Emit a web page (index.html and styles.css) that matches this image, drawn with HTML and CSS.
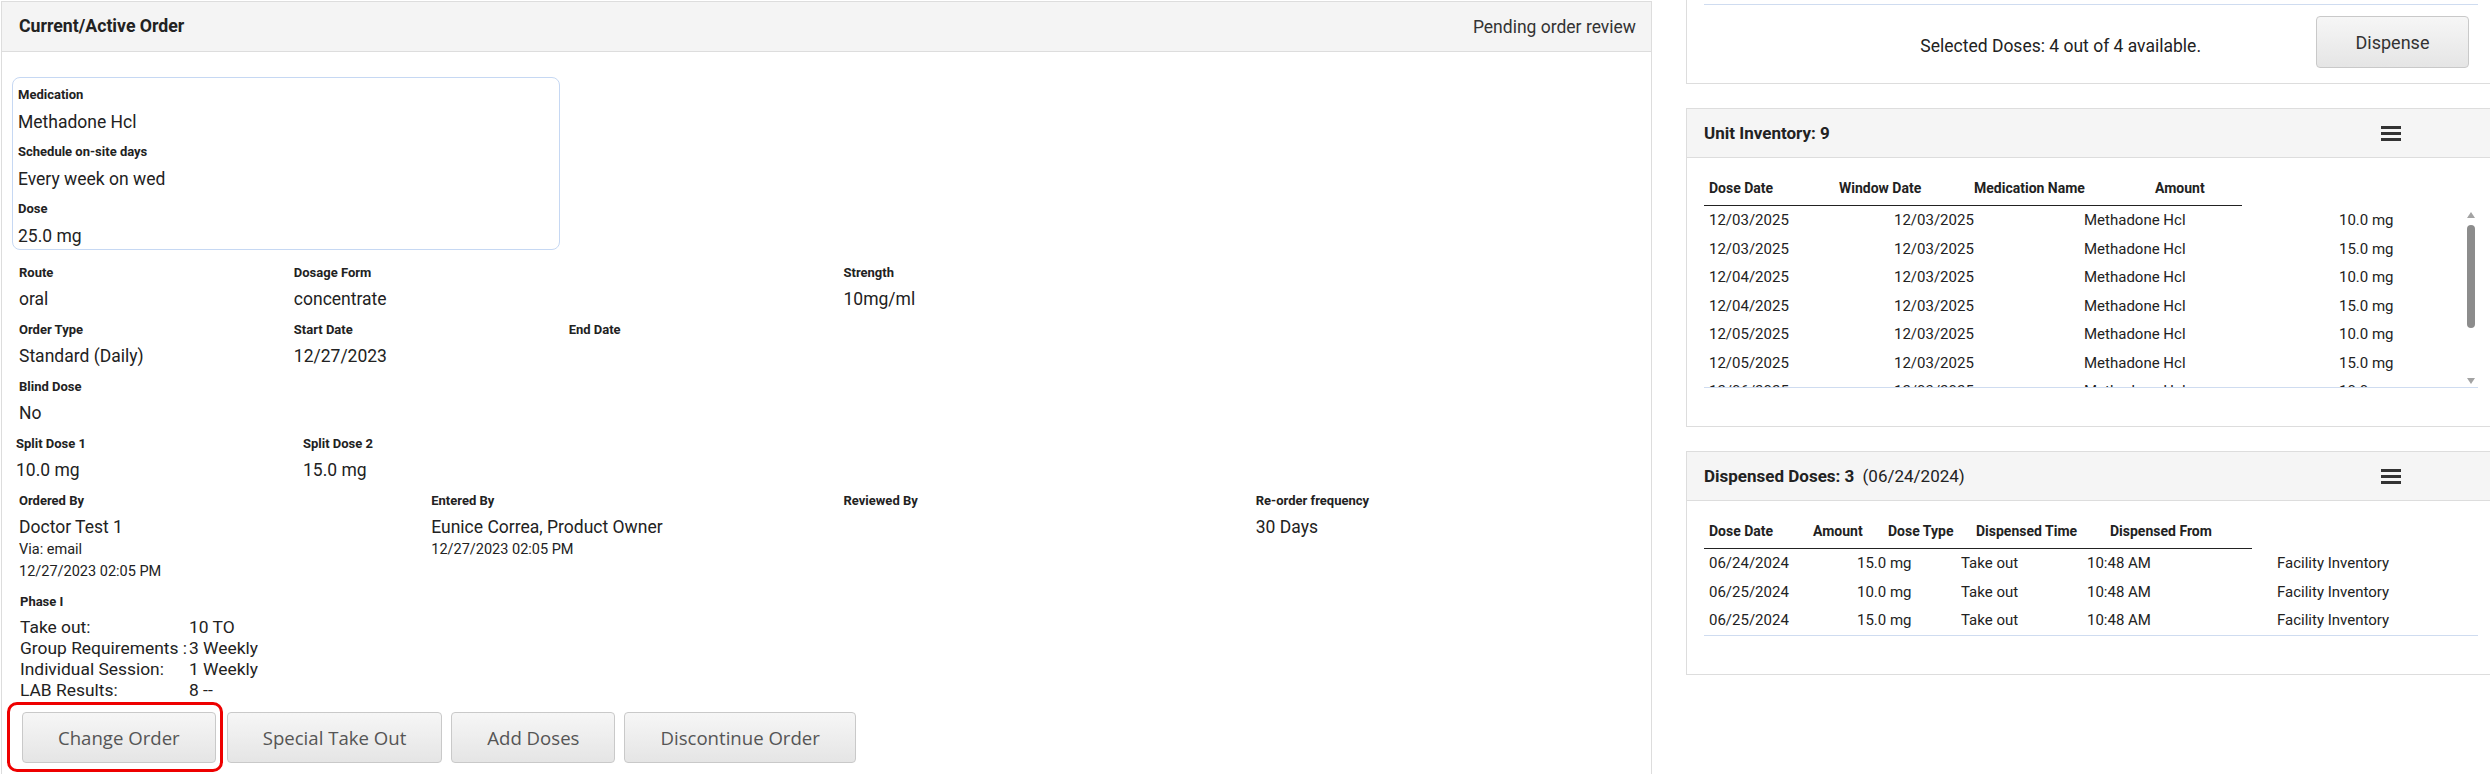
FILE: index.html
```html
<!DOCTYPE html>
<html lang="en">
<head>
    <meta charset="UTF-8">
    <title>Current/Active Order</title>
    <link rel="stylesheet" href="styles.css">
</head>
<body>
<div class="page">
    <section class="order-panel">
        <div class="panel-head">
            <h2>Current/Active Order</h2>
            <span class="status">Pending order review</span>
        </div>

        <div class="med-box">
            <div class="field"><div class="label">Medication</div><div class="value">Methadone Hcl</div></div>
            <div class="field"><div class="label">Schedule on-site days</div><div class="value">Every week on wed</div></div>
            <div class="field"><div class="label">Dose</div><div class="value">25.0 mg</div></div>
        </div>

        <div class="grid six first">
            <div class="field"><div class="label">Route</div><div class="value">oral</div></div>
            <div class="field"><div class="label">Dosage Form</div><div class="value">concentrate</div></div>
            <div></div>
            <div class="field"><div class="label">Strength</div><div class="value">10mg/ml</div></div>
        </div>
        <div class="grid six">
            <div class="field"><div class="label">Order Type</div><div class="value">Standard (Daily)</div></div>
            <div class="field"><div class="label">Start Date</div><div class="value">12/27/2023</div></div>
            <div class="field"><div class="label">End Date</div></div>
        </div>
        <div class="grid six">
            <div class="field"><div class="label">Blind Dose</div><div class="value">No</div></div>
        </div>
        <div class="grid split">
            <div class="field"><div class="label">Split Dose 1</div><div class="value">10.0 mg</div></div>
            <div class="field"><div class="label">Split Dose 2</div><div class="value">15.0 mg</div></div>
        </div>
        <div class="grid four">
            <div class="field">
                <div class="label">Ordered By</div>
                <div class="value">Doctor Test 1</div>
                <div class="sub">Via: email</div>
                <div class="sub">12/27/2023 02:05 PM</div>
            </div>
            <div class="field">
                <div class="label">Entered By</div>
                <div class="value">Eunice Correa, Product Owner</div>
                <div class="sub">12/27/2023 02:05 PM</div>
            </div>
            <div class="field"><div class="label">Reviewed By</div></div>
            <div class="field"><div class="label">Re-order frequency</div><div class="value">30 Days</div></div>
        </div>

        <div class="phase">
            <div class="label">Phase I</div>
            <div class="phase-table">
                <span>Take out:</span><span>10 TO</span>
                <span>Group Requirements :</span><span>3 Weekly</span>
                <span>Individual Session:</span><span>1 Weekly</span>
                <span>LAB Results:</span><span>8 --</span>
            </div>
        </div>

        <div class="actions">
            <div class="highlight"><button class="btn">Change Order</button></div>
            <button class="btn">Special Take Out</button>
            <button class="btn">Add Doses</button>
            <button class="btn">Discontinue Order</button>
        </div>
    </section>

    <aside class="side">
        <div class="top-panel">
            <div class="table-end"></div>
            <div class="dispense-bar">
                <span class="selected">Selected Doses: 4 out of 4 available.</span>
                <button class="btn dispense">Dispense</button>
            </div>
        </div>

        <section class="panel">
            <div class="panel-head">
                <h3>Unit Inventory: 9</h3>
                <svg class="menu" width="20" height="15" viewBox="0 0 20 15"><rect y="0" width="20" height="3"/><rect y="6" width="20" height="3"/><rect y="12" width="20" height="3"/></svg>
            </div>
            <div class="panel-body">
                <table class="head-table inv-head">
                    <tr><th>Dose Date</th><th>Window Date</th><th>Medication Name</th><th>Amount</th></tr>
                </table>
                <div class="scroll">
                    <div class="scroll-rows">
                        <table class="rows inv-rows">
                            <tr><td>12/03/2025</td><td>12/03/2025</td><td>Methadone Hcl</td><td>10.0 mg</td></tr>
                            <tr><td>12/03/2025</td><td>12/03/2025</td><td>Methadone Hcl</td><td>15.0 mg</td></tr>
                            <tr><td>12/04/2025</td><td>12/03/2025</td><td>Methadone Hcl</td><td>10.0 mg</td></tr>
                            <tr><td>12/04/2025</td><td>12/03/2025</td><td>Methadone Hcl</td><td>15.0 mg</td></tr>
                            <tr><td>12/05/2025</td><td>12/03/2025</td><td>Methadone Hcl</td><td>10.0 mg</td></tr>
                            <tr><td>12/05/2025</td><td>12/03/2025</td><td>Methadone Hcl</td><td>15.0 mg</td></tr>
                            <tr><td>12/06/2025</td><td>12/03/2025</td><td>Methadone Hcl</td><td>10.0 mg</td></tr>
                            <tr><td>12/06/2025</td><td>12/03/2025</td><td>Methadone Hcl</td><td>15.0 mg</td></tr>
                            <tr><td>12/07/2025</td><td>12/03/2025</td><td>Methadone Hcl</td><td>10.0 mg</td></tr>
                        </table>
                    </div>
                    <div class="scrollbar">
                        <span class="arrow up"></span>
                        <span class="thumb"></span>
                        <span class="arrow down"></span>
                    </div>
                </div>
            </div>
        </section>

        <section class="panel">
            <div class="panel-head">
                <h3>Dispensed Doses: 3 <span class="date">(06/24/2024)</span></h3>
                <svg class="menu" width="20" height="15" viewBox="0 0 20 15"><rect y="0" width="20" height="3"/><rect y="6" width="20" height="3"/><rect y="12" width="20" height="3"/></svg>
            </div>
            <div class="panel-body">
                <table class="head-table disp-head">
                    <tr><th>Dose Date</th><th>Amount</th><th>Dose Type</th><th>Dispensed Time</th><th>Dispensed From</th></tr>
                </table>
                <table class="rows disp-rows">
                    <tr><td>06/24/2024</td><td>15.0 mg</td><td>Take out</td><td>10:48 AM</td><td>Facility Inventory</td></tr>
                    <tr><td>06/25/2024</td><td>10.0 mg</td><td>Take out</td><td>10:48 AM</td><td>Facility Inventory</td></tr>
                    <tr><td>06/25/2024</td><td>15.0 mg</td><td>Take out</td><td>10:48 AM</td><td>Facility Inventory</td></tr>
                </table>
            </div>
        </section>
    </aside>
</div>
</body>
</html>
```

FILE: styles.css
```css
* {
    box-sizing: border-box;
}

html, body {
    margin: 0;
    overflow: hidden;
}

body {
    font-family: Roboto, "Liberation Sans", sans-serif;
    color: #222;
    background: #fff;
}

.page {
    display: flex;
    align-items: flex-start;
    gap: 34px;
    width: 2496px;
    padding-left: 1px;
}

/* left panel */
.order-panel {
    width: 1651px;
    height: 800px;
    margin-top: 1px;
    border: 1px solid #ddd;
    border-bottom: none;
}

.panel-head {
    display: flex;
    justify-content: space-between;
    align-items: center;
    height: 50px;
    padding: 0 15px 0 17px;
    background: #f4f4f4;
    border-bottom: 1px solid #ddd;
}

.panel-head h2 {
    margin: 0;
    font-size: 17.7px;
    font-weight: 700;
    line-height: 49px;
}

.status {
    font-size: 17.5px;
    color: #333;
}

.med-box {
    width: 548px;
    margin: 25px 0 0 10px;
    padding: 9px 5px 1px;
    border: 1.5px solid #c6d8f3;
    border-radius: 8px;
}

.label {
    font-size: 13px;
    font-weight: 700;
    line-height: 16px;
    color: #222;
}

.value {
    font-size: 17.5px;
    line-height: 24px;
}

.sub {
    font-size: 14.5px;
    line-height: 22px;
}

.med-box .label {
    margin-bottom: 7px;
}

.med-box .field {
    margin-bottom: 10px;
}

.med-box .field:last-child {
    margin-bottom: 0;
}

.grid {
    display: grid;
}

.grid .label {
    margin-bottom: 6px;
}

.grid .field {
    margin-bottom: 11px;
}

.grid.first {
    margin-top: 14.5px;
}

.grid.six {
    grid-template-columns: repeat(6, 1fr);
}

.grid.four {
    grid-template-columns: repeat(4, 1fr);
}

.grid.six > div,
.grid.four > div {
    padding-left: 17px;
}

.grid.split {
    grid-template-columns: 287px 287px;
    padding-left: 14px;
}

.phase {
    padding-left: 18px;
}

.phase .label {
    margin-bottom: 7px;
}

.phase-table {
    display: grid;
    grid-template-columns: 169px auto;
    font-size: 17.4px;
    line-height: 21px;
    white-space: nowrap;
}

.actions {
    display: flex;
    align-items: flex-start;
    gap: 9px;
    margin: 1.5px 0 0 5px;
}

.highlight {
    margin-right: -5px;
    padding: 7px 4px 6px 12px;
    border: 3px solid #ee0000;
    border-radius: 10px;
}

.actions > .btn {
    margin-top: 10px;
}

.btn {
    height: 51px;
    padding: 0 35px;
    font-family: "Open Sans", "DejaVu Sans", sans-serif;
    font-size: 18.6px;
    color: #555;
    background: linear-gradient(#f6f6f6, #e5e5e5);
    border: 1px solid #c9c9c9;
    border-radius: 4px;
}

/* right column */
.side {
    display: flex;
    flex-direction: column;
    gap: 24px;
    width: 810px;
}

.top-panel {
    padding: 4px 17px 15px;
    border: 1px solid #ddd;
    border-top: none;
}

.table-end {
    border-top: 1px solid #cfdcf0;
}

.dispense-bar {
    display: flex;
    justify-content: flex-end;
    align-items: flex-start;
    margin-top: 11px;
    padding-right: 9px;
}

.selected {
    margin: 20px 115px 0 0;
    font-size: 17.5px;
    line-height: 20px;
}

.btn.dispense {
    width: 153px;
    height: 52px;
    padding: 0;
    font-family: Roboto, sans-serif;
    font-size: 18px;
    color: #333;
}

.panel {
    border: 1px solid #ddd;
}

.panel .panel-head {
    height: 49px;
    padding: 0 94px 0 17px;
    background: #f5f5f5;
}

.panel-head h3 {
    margin: 0;
    font-size: 17px;
    font-weight: 700;
    line-height: 48px;
}

.panel-head h3 .date {
    margin-left: 4px;
    font-weight: 400;
}

.menu {
    fill: #333;
}

.panel-body {
    padding: 20px 17px 38px;
}

table {
    border-collapse: collapse;
    table-layout: fixed;
}

.head-table th {
    padding: 0 5px 7px;
    font-size: 14px;
    font-weight: 700;
    line-height: 20px;
    text-align: left;
    white-space: nowrap;
    border-bottom: 1px solid #222;
}

.rows td {
    padding: 0 5px;
    font-size: 15px;
    line-height: 28.5px;
    white-space: nowrap;
}

.inv-head { width: 538px; }
.inv-head th:nth-child(1) { width: 130px; }
.inv-head th:nth-child(2) { width: 135px; }
.inv-head th:nth-child(3) { width: 181px; }

.inv-rows { width: 100%; }
.inv-rows td:nth-child(1) { width: 185px; }
.inv-rows td:nth-child(2) { width: 190px; }
.inv-rows td:nth-child(3) { width: 255px; }

.scroll {
    display: flex;
    height: 182px;
    border-bottom: 1px solid #cfdcf0;
}

.scroll-rows {
    flex: 1;
    overflow: hidden;
}

.scrollbar {
    display: flex;
    flex-direction: column;
    align-items: center;
    width: 14px;
    padding: 6px 0 3px;
}

.arrow {
    width: 0;
    height: 0;
    border-left: 4px solid transparent;
    border-right: 4px solid transparent;
}

.arrow.up {
    border-bottom: 6px solid #a3a3a3;
}

.arrow.down {
    margin-top: auto;
    border-top: 6px solid #a3a3a3;
}

.thumb {
    width: 8px;
    height: 103px;
    margin-top: 7px;
    background: #8c8c8c;
    border-radius: 4px;
}

.disp-head { width: 548px; }
.disp-head th:nth-child(1) { width: 104px; }
.disp-head th:nth-child(2) { width: 75px; }
.disp-head th:nth-child(3) { width: 88px; }
.disp-head th:nth-child(4) { width: 134px; }

.disp-rows {
    width: 100%;
    border-bottom: 1px solid #cfdcf0;
}
.disp-rows td:nth-child(1) { width: 148px; }
.disp-rows td:nth-child(2) { width: 104px; }
.disp-rows td:nth-child(3) { width: 126px; }
.disp-rows td:nth-child(4) { width: 190px; }
```
